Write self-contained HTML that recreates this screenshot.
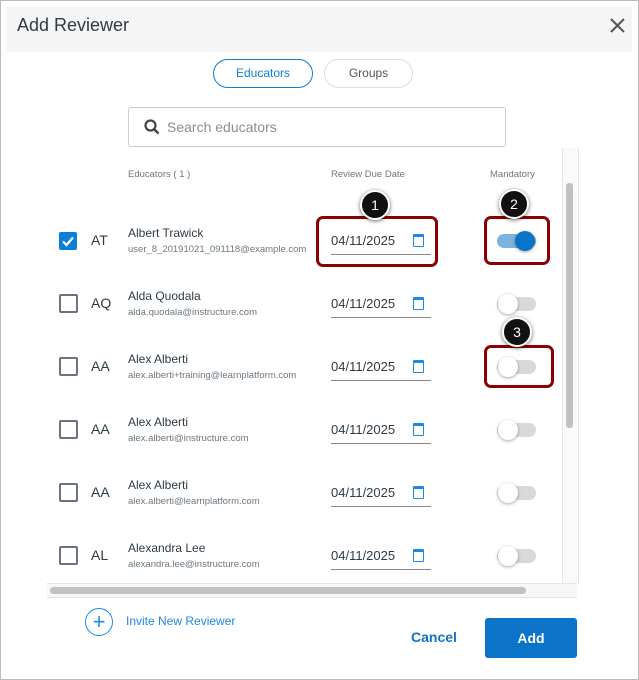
<!DOCTYPE html><html><head><style>
body{margin:0;width:639px;height:680px;position:relative;background:#fff;font-family:"Liberation Sans",sans-serif;overflow:hidden}
.a{position:absolute}
.cb{position:absolute;left:59px;width:15px;height:15px;border:2px solid #6b7280;border-radius:2px}
.ini{position:absolute;left:91px;font-size:14px;color:#2d3b45}
.nm{position:absolute;left:128px;font-size:12px;color:#2d3b45}
.em{position:absolute;left:128px;font-size:9.5px;color:#6b7780}
.dt{position:absolute;left:331px;font-size:13px;color:#2d3b45}
.ul{position:absolute;left:331px;width:100px;height:1px;background:#888}
.cal{position:absolute;left:413px;width:9px;height:9px;border:1.5px solid #1e88e5;border-top-width:3px;border-radius:1px}
.tr{position:absolute;left:497px;width:39px;height:14px;border-radius:7px;background:#d9d9d9}
.kn{position:absolute;left:498px;width:20px;height:20px;border-radius:50%;background:#fff;box-shadow:0 1px 3px rgba(0,0,0,.35)}
.box{position:absolute;border:3px solid #8b0000;border-radius:7px}
.mk{position:absolute;width:26px;height:26px;border-radius:50%;background:#111;border:2px solid #fff;box-shadow:0 1px 4px rgba(0,0,0,.6);color:#fff;font-size:14px;text-align:center;line-height:26px}
</style></head><body>
<div class="a" style="left:0;top:0;width:637px;height:678px;border:1px solid #bbb"></div>
<div class="a" style="left:7px;top:7px;width:625px;height:45px;background:#f5f5f5"></div>
<div class="a" style="left:17px;top:15px;font-size:18px;color:#2d3b45">Add Reviewer</div>
<svg class="a" style="left:610px;top:18px" width="15" height="15"><path d="M1 1L14 14M14 1L1 14" stroke="#555" stroke-width="2"/></svg>
<div class="a" style="left:213px;top:59px;width:98px;height:27px;border:1px solid #0b7fd6;border-radius:15px;color:#0b7fd6;font-size:12px;text-align:center;line-height:27px">Educators</div>
<div class="a" style="left:324px;top:59px;width:87px;height:27px;border:1px solid #ddd;border-radius:15px;color:#555;font-size:12px;text-align:center;line-height:27px">Groups</div>
<div class="a" style="left:128px;top:107px;width:376px;height:38px;border:1.5px solid #ccc;border-radius:3px"></div>
<svg class="a" style="left:144px;top:119px" width="16" height="16"><circle cx="6.5" cy="6.5" r="5" stroke="#444" stroke-width="2.2" fill="none"/><path d="M10 10L14.5 14.5" stroke="#444" stroke-width="2.5"/></svg>
<div class="a" style="left:167px;top:119px;font-size:14px;color:#8a8f95">Search educators</div>
<div class="a" style="left:562px;top:148px;width:15px;height:436px;border-left:1px solid #e5e5e5;border-right:1px solid #e5e5e5;background:#fafafa"></div>
<div class="a" style="left:566px;top:183px;width:7px;height:245px;background:#c1c1c1;border-radius:3px"></div>
<div class="a" style="left:47px;top:583px;width:530px;height:1px;background:#e5e5e5"></div>
<div class="a" style="left:47px;top:584px;width:530px;height:13px;background:#f7f7f7;border-bottom:1px solid #e5e5e5"></div>
<div class="a" style="left:50px;top:587px;width:476px;height:7px;background:#c1c1c1;border-radius:4px"></div>
<div class="a" style="left:128px;top:169px;font-size:9.5px;color:#6b7780">Educators ( 1 )</div>
<div class="a" style="left:331px;top:169px;font-size:9.5px;color:#6b7780">Review Due Date</div>
<div class="a" style="left:490px;top:169px;font-size:9.5px;color:#6b7780">Mandatory</div>

<!-- row 1 -->
<div class="a" style="left:59px;top:232px;width:18px;height:18px;background:#0b7fd6;border-radius:2px"></div>
<svg class="a" style="left:59px;top:232px" width="18" height="18"><path d="M4 9.5L7.5 13L14 5.5" stroke="#fff" stroke-width="2.2" fill="none"/></svg>
<div class="ini" style="top:232px">AT</div><div class="nm" style="top:226px">Albert Trawick</div><div class="em" style="top:244px">user_8_20191021_091118@example.com</div>
<div class="dt" style="top:233px">04/11/2025</div><div class="cal" style="top:234px"></div><div class="ul" style="top:254px"></div>
<div class="tr" style="top:234px;background:#7cb3e0"></div><div class="kn" style="top:231px;left:515px;background:#0b74c8"></div>

<div class="cb" style="top:294px"></div><div class="ini" style="top:295px">AQ</div><div class="nm" style="top:289px">Alda Quodala</div><div class="em" style="top:307px">alda.quodala@instructure.com</div>
<div class="dt" style="top:296px">04/11/2025</div><div class="cal" style="top:297px"></div><div class="ul" style="top:317px"></div><div class="tr" style="top:297px"></div><div class="kn" style="top:294px"></div>

<div class="cb" style="top:357px"></div><div class="ini" style="top:358px">AA</div><div class="nm" style="top:352px">Alex Alberti</div><div class="em" style="top:370px">alex.alberti+training@learnplatform.com</div>
<div class="dt" style="top:359px">04/11/2025</div><div class="cal" style="top:360px"></div><div class="ul" style="top:380px"></div><div class="tr" style="top:360px"></div><div class="kn" style="top:357px"></div>

<div class="cb" style="top:420px"></div><div class="ini" style="top:421px">AA</div><div class="nm" style="top:415px">Alex Alberti</div><div class="em" style="top:433px">alex.alberti@instructure.com</div>
<div class="dt" style="top:422px">04/11/2025</div><div class="cal" style="top:423px"></div><div class="ul" style="top:443px"></div><div class="tr" style="top:423px"></div><div class="kn" style="top:420px"></div>

<div class="cb" style="top:483px"></div><div class="ini" style="top:484px">AA</div><div class="nm" style="top:478px">Alex Alberti</div><div class="em" style="top:496px">alex.alberti@learnplatform.com</div>
<div class="dt" style="top:485px">04/11/2025</div><div class="cal" style="top:486px"></div><div class="ul" style="top:506px"></div><div class="tr" style="top:486px"></div><div class="kn" style="top:483px"></div>

<div class="cb" style="top:546px"></div><div class="ini" style="top:547px">AL</div><div class="nm" style="top:541px">Alexandra Lee</div><div class="em" style="top:559px">alexandra.lee@instructure.com</div>
<div class="dt" style="top:548px">04/11/2025</div><div class="cal" style="top:549px"></div><div class="ul" style="top:569px"></div><div class="tr" style="top:549px"></div><div class="kn" style="top:546px"></div>

<!-- annotations -->
<div class="box" style="left:316px;top:216px;width:116px;height:45px"></div>
<div class="box" style="left:484px;top:216px;width:60px;height:43px"></div>
<div class="box" style="left:484px;top:345px;width:64px;height:37px"></div>
<div class="mk" style="left:360px;top:190px">1</div>
<div class="mk" style="left:499px;top:189px">2</div>
<div class="mk" style="left:502px;top:317px">3</div>

<!-- footer -->
<div class="a" style="left:85px;top:608px;width:26px;height:26px;border:1.5px solid #1e88e5;border-radius:50%;color:#1e88e5;font-size:22px;text-align:center;line-height:26px">+</div>
<div class="a" style="left:126px;top:614px;font-size:12px;color:#1e88e5">Invite New Reviewer</div>
<div class="a" style="left:411px;top:629px;font-size:14px;font-weight:bold;color:#0b74c8">Cancel</div>
<div class="a" style="left:485px;top:618px;width:92px;height:40px;background:#0b74c8;border-radius:3px;color:#fff;font-size:14px;font-weight:bold;text-align:center;line-height:40px">Add</div>
</body></html>
